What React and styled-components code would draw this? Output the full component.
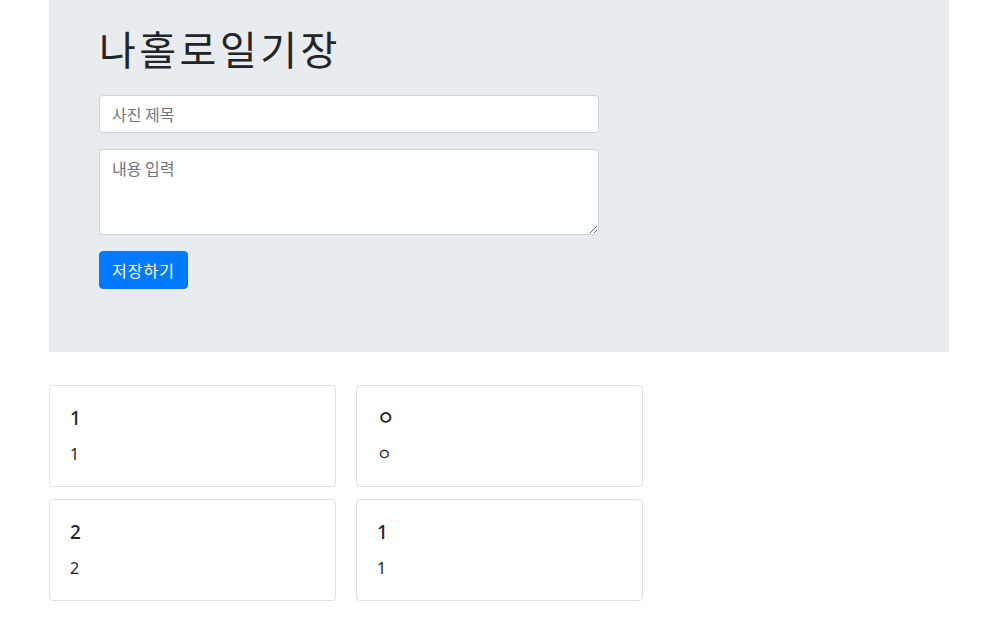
import React from 'react';
import styled, { createGlobalStyle } from 'styled-components';

const GlobalStyle = createGlobalStyle`
  * { box-sizing: border-box; }
  body {
    margin: 0;
    background: #fff;
    color: #212529;
    font-family: "Noto Sans", "Noto Sans CJK KR", sans-serif;
    font-size: 16px;
    line-height: 1.5;
  }
`;

const Page = styled.div`
  width: 900px;
  margin-left: 49px;
`;

const Jumbotron = styled.section`
  background: #e9ecef;
  padding: 24px 50px 63px;
`;

const Title = styled.h1`
  margin: 0 0 23px;
  font-family: "Noto Sans CJK KR", sans-serif;
  font-size: 40px;
  font-weight: 400;
  line-height: 1.2;
  letter-spacing: 3.5px;
`;

const Form = styled.form`
  width: 500px;
  display: flex;
  flex-direction: column;
  align-items: flex-start;
  gap: 16px;
`;

const fieldStyle = `
  display: block;
  width: 100%;
  padding: 6px 12px;
  font-family: "Noto Sans CJK KR", sans-serif;
  font-size: 16px;
  line-height: 1.5;
  color: #495057;
  background: #fff;
  border: 1px solid #ced4da;
  border-radius: 4px;
  outline: none;
  &::placeholder { color: #6c757d; opacity: 1; }
`;

const Input = styled.input`
  ${fieldStyle}
  height: 38px;
`;

const TextArea = styled.textarea`
  ${fieldStyle}
  height: 86px;
  resize: vertical;
`;

const Button = styled.button`
  padding: 6px 12px;
  height: 38px;
  font-family: "Noto Sans CJK KR", sans-serif;
  font-size: 16px;
  line-height: 1.5;
  letter-spacing: 1px;
  color: #fff;
  background: #007bff;
  border: 1px solid #007bff;
  border-radius: 4px;
  cursor: pointer;
`;

const CardGrid = styled.div`
  margin-top: 33px;
  display: grid;
  grid-template-columns: 287px 287px;
  column-gap: 20px;
  row-gap: 12px;
`;

const Card = styled.div`
  border: 1px solid rgba(0, 0, 0, 0.125);
  border-radius: 4px;
  padding: 21px 20px 20px;
  height: 102px;
`;

const CardTitle = styled.h5`
  margin: 0 0 12px;
  font-size: 19px;
  font-weight: 500;
  line-height: 1.2;
`;

const CardText = styled.p`
  margin: 0;
  font-size: 16px;
  line-height: 1.5;
`;

const diaries = [
  { title: '1', content: '1' },
  { title: 'ㅇ', content: 'ㅇ' },
  { title: '2', content: '2' },
  { title: '1', content: '1' },
];

export default function App() {
  return (
    <>
      <GlobalStyle />
      <Page>
        <Jumbotron>
          <Title>나홀로일기장</Title>
          <Form onSubmit={(e) => e.preventDefault()}>
            <Input placeholder="사진 제목" />
            <TextArea rows={3} placeholder="내용 입력" />
            <Button type="submit">저장하기</Button>
          </Form>
        </Jumbotron>
        <CardGrid>
          {diaries.map((d, i) => (
            <Card key={i}>
              <CardTitle>{d.title}</CardTitle>
              <CardText>{d.content}</CardText>
            </Card>
          ))}
        </CardGrid>
      </Page>
    </>
  );
}
